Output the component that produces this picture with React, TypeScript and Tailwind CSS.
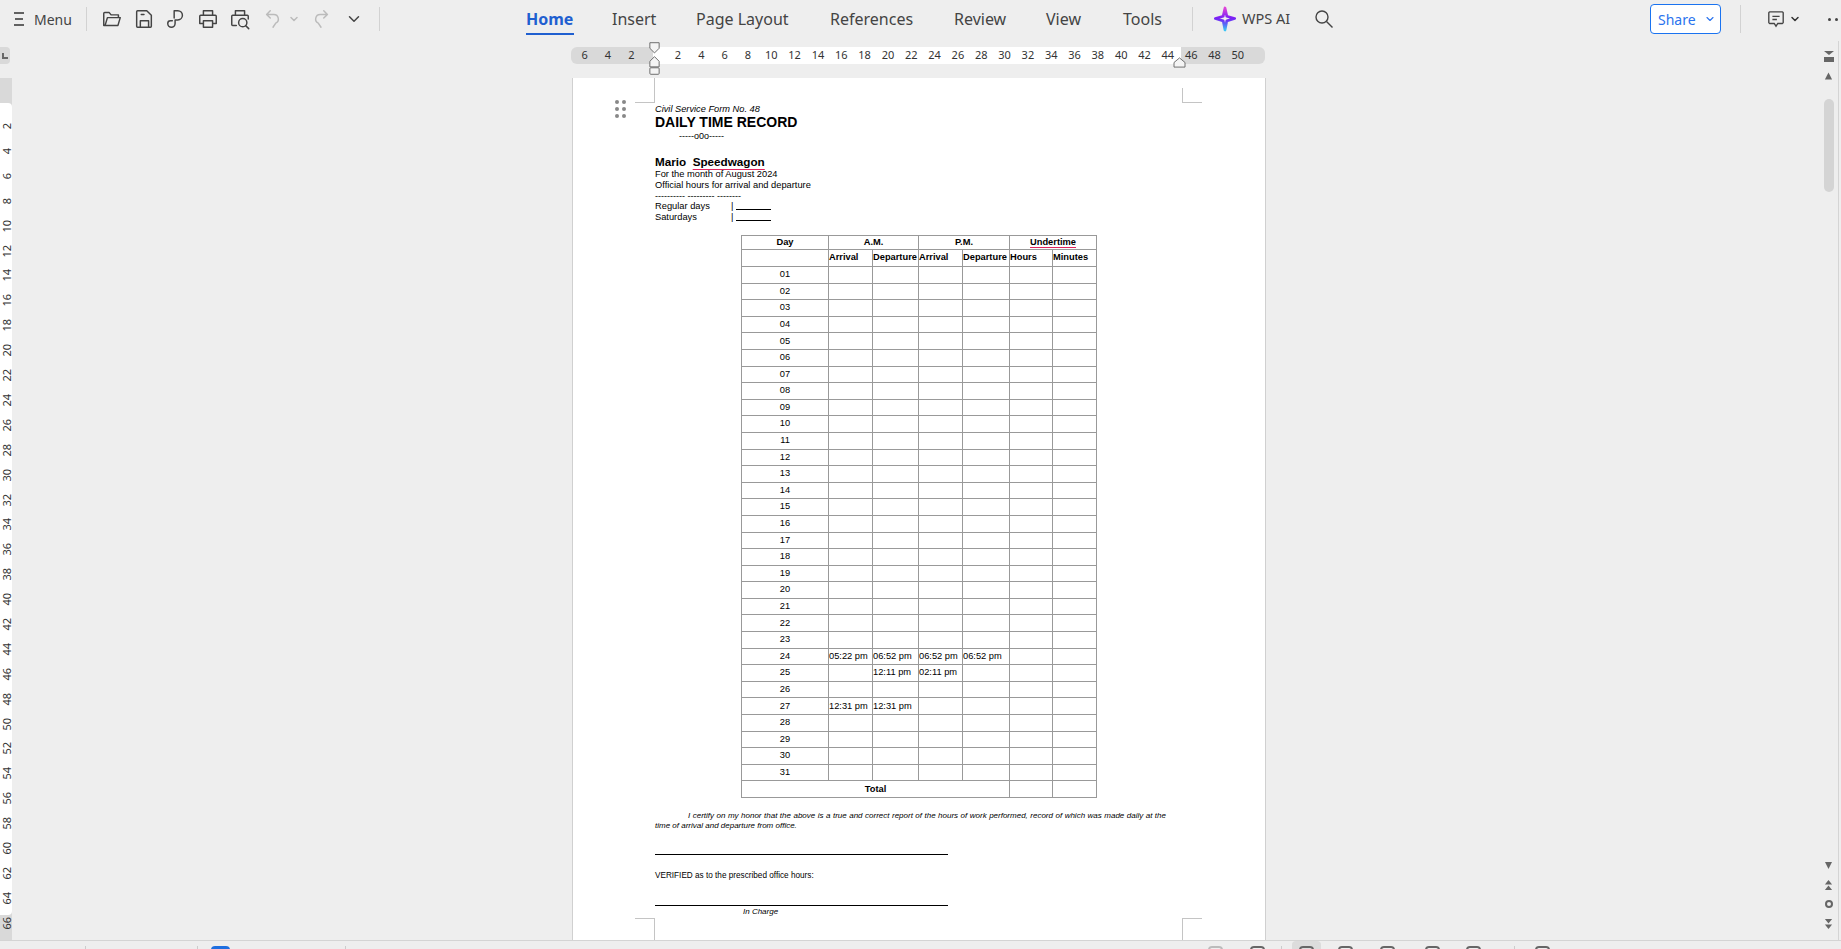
import { ChevronDown } from "lucide-react";
import React from "react";

const tabs = [
    { label: "Home", cls: "w-[86px] text-[#1f5fd0] font-bold" },
    { label: "Insert", cls: "w-[84px]" },
    { label: "Page Layout", cls: "w-[134px]" },
    { label: "References", cls: "w-[124px]" },
    { label: "Review", cls: "w-[92px]" },
    { label: "View", cls: "w-[77px]" },
    { label: "Tools", cls: "w-[60px]" },
];

const hRuler = [6, 4, 2, 0, 2, 4, 6, 8, 10, 12, 14, 16, 18, 20, 22, 24, 26, 28, 30, 32, 34, 36, 38, 40, 42, 44, 46, 48, 50];
const vRuler = Array.from({ length: 33 }, (_, i) => (i + 1) * 2);

const times: Record<number, string[]> = {
    24: ["05:22 pm", "06:52 pm", "06:52 pm", "06:52 pm"],
    25: ["", "12:11 pm", "02:11 pm", ""],
    27: ["12:31 pm", "12:31 pm", "", ""],
};

const days = Array.from({ length: 31 }, (_, i) => i + 1);

const IconBox = ({ children, className = "" }: { children: React.ReactNode; className?: string }) => (
    <svg viewBox="0 0 24 24" fill="none" stroke="currentColor" strokeWidth="1.6" strokeLinejoin="round" strokeLinecap="round" className={`w-[22px] h-[22px] ${className}`}>
        {children}
    </svg>
);

const Toolbar = () => (
    <div className="h-[38px] flex items-center shrink-0 text-[#444]">
        <div className="w-[86px] flex items-center pl-[14px] gap-[10px] shrink-0">
            <svg viewBox="0 0 10 14" className="w-[10px] h-[14px]" stroke="#333" strokeWidth="1.5">
                <path d="M0 1h10M1 7h8M0 13h10" />
            </svg>
            <span className="text-[14px]">Menu</span>
        </div>
        <div className="w-px h-6 bg-[#d2d2d2] shrink-0" />
        <div className="w-[292px] flex items-center pl-[14px] shrink-0">
            <IconBox className="mr-[10px]">
                <path d="M3 19V6a1 1 0 0 1 1-1h5l2 2.500h8v3M3 19h15.500l2.500-8.500H7L4.500 19" />
            </IconBox>
            <IconBox className="mr-[10px]">
                <path d="M5 3h10l5 5v12a1 1 0 0 1-1 1H5a1 1 0 0 1-1-1V4a1 1 0 0 1 1-1zM8 21v-7h9v7M9 7h3" />
            </IconBox>
            <IconBox className="mr-[10px]">
                <path d="M10 3h4a5 5 0 0 1 0 10h-3v4a4 4 0 0 1-8 0 3 3 0 0 1 3-3h2M10 3v8" />
            </IconBox>
            <IconBox className="mr-[10px]">
                <path d="M7 8V3h10v5M4 8h16a1 1 0 0 1 1 1v8h-4M7 17H3V9a1 1 0 0 1 1-1M7 14h10v7H7z" />
            </IconBox>
            <IconBox className="mr-[11px]">
                <path d="M7 8V3h10v5M8 19H4a1 1 0 0 1-1-1V9a1 1 0 0 1 1-1h16a1 1 0 0 1 1 1v3" />
                <circle cx="15" cy="16" r="4.500" />
                <path d="M18 19l3.500 3.500" />
            </IconBox>
            <IconBox className="text-[#bbb]">
                <path d="M9 3L5 7l4 4M5 7h8a5 5 0 0 1 2 9.500L12 21" />
            </IconBox>
            <ChevronDown className="w-3 h-3 text-[#bbb] mx-[4px]" strokeWidth={3} />
            <IconBox className="text-[#bbb] ml-[6px] mr-[13px]">
                <path d="M15 3l4 4-4 4M19 7h-8a5 5 0 0 0-2 9.500L12 21" />
            </IconBox>
            <ChevronDown className="w-[18px] h-[18px] text-[#444]" strokeWidth={2} />
        </div>
        <div className="w-px h-6 bg-[#d2d2d2] shrink-0" />
        <div className="flex items-center pl-[146px] shrink-0">
            {tabs.map((t) => (
                <div key={t.label} className={`h-[38px] flex items-center text-[16px] relative shrink-0 ${t.cls}`}>
                    {t.label}
                    {t.label === "Home" && <div className="absolute left-0 bottom-[3px] w-[48px] h-[2px] bg-[#1f5fd0]" />}
                </div>
            ))}
        </div>
        <div className="w-px h-6 bg-[#d2d2d2] ml-[9px] shrink-0" />
        <svg viewBox="0 0 24 28" className="w-[22px] h-[26px] ml-[21px] shrink-0">
            <defs>
                <linearGradient id="aiStar" x1="0" y1="0" x2="0" y2="1">
                    <stop offset="0" stopColor="#e045d8" />
                    <stop offset="0.45" stopColor="#7a1ff5" />
                    <stop offset="0.6" stopColor="#6a3cf5" />
                    <stop offset="1" stopColor="#3cc4f5" />
                </linearGradient>
            </defs>
            <path d="M12 2 L14 11 L22.500 13.500 L14 16 L12 26 L10 16 L1.500 13.500 L10 11 Z" fill="none" stroke="url(#aiStar)" strokeWidth="3" strokeLinejoin="round" />
        </svg>
        <span className="text-[14.500px] ml-[6px] w-[48px] shrink-0 whitespace-nowrap">WPS AI</span>
        <svg viewBox="0 0 18 18" fill="none" stroke="#444" strokeWidth="1.4" className="w-[18px] h-[18px] ml-[25px] shrink-0">
            <circle cx="7" cy="7" r="6" />
            <path d="M11.500 11.500L17.500 17.500" />
        </svg>
        <div className="ml-[317px] w-[71px] h-[30px] shrink-0 bg-white border border-[#1a73f0] rounded flex items-center pl-[7px] text-[#2a73ee] text-[14px]">
            Share
            <ChevronDown className="w-3 h-3 ml-[8px]" strokeWidth={2.2} />
        </div>
        <div className="w-px h-7 bg-[#d2d2d2] ml-[19px] shrink-0" />
        <svg viewBox="0 0 20 20" fill="none" stroke="#444" strokeWidth="1.500" className="w-[18px] h-[18px] ml-[26px] shrink-0">
            <path d="M3 2h14a1.500 1.500 0 0 1 1 1v11a1.500 1.500 0 0 1-1 1h-5l-2 3-2-3H3a1.500 1.500 0 0 1-1-1V3a1.500 1.500 0 0 1 1-1zM6 7h8M6 10.500h5" />
        </svg>
        <ChevronDown className="w-3 h-3 ml-[4px] text-[#333] shrink-0" strokeWidth={3} />
        <div className="flex gap-[4px] ml-[27px] shrink-0">
            <div className="w-[3px] h-[3px] rounded-full bg-[#444]" />
            <div className="w-[3px] h-[3px] rounded-full bg-[#444]" />
            <div className="w-[3px] h-[3px] rounded-full bg-[#444]" />
        </div>
    </div>
);

const RulerRow = () => (
    <div className="h-[40px] pt-[9px] flex shrink-0">
        <div className="w-[10px] h-[17px] bg-[#d9d9d9] rounded-r flex items-end justify-center pb-[5px] shrink-0">
            <div className="w-[6px] h-[6px] border-l-2 border-b-2 border-[#666]" />
        </div>
        <div className="relative ml-[561px] w-[694px] h-[17px] bg-[#d9d9d9] rounded-md flex text-[11px] text-[#333] shrink-0">
            <div className="absolute left-[82px] top-0 w-[528px] h-[17px] bg-white" />
            <div className="relative flex pl-[2px]">
                {hRuler.map((n, i) => (
                    <div key={i} className="w-[23.33px] h-[17px] flex items-center justify-center shrink-0">
                        {n !== 0 ? n : ""}
                    </div>
                ))}
            </div>
            <svg viewBox="0 0 14 36" className="absolute left-[77px] -top-[6px] w-[13px] h-[35px]" fill="#f4f4f4" stroke="#666">
                <path d="M2 1h10v6l-5 5-5-5zM7 16l5 5v6H2v-6zM3 28h8a1 1 0 0 1 1 1v5a1 1 0 0 1-1 1H3a1 1 0 0 1-1-1v-5a1 1 0 0 1 1-1z" />
            </svg>
            <svg viewBox="0 0 14 12" className="absolute left-[602px] top-[10px] w-[13px] h-[11px]" fill="#f4f4f4" stroke="#666">
                <path d="M7 1l6 5v5H1V6z" />
            </svg>
        </div>
    </div>
);

const VerticalRuler = () => (
    <div className="w-3 h-full bg-[#d9d9d9] relative shrink-0">
        <div className="absolute left-0 top-[25px] w-3 h-[812px] bg-white rounded-r" />
        <div className="relative pt-[36px] flex flex-col items-center">
            {vRuler.map((n) => (
                <div key={n} className="h-[24.900px] w-3 flex items-center justify-center shrink-0 text-[11px] leading-none text-[#333]">
                    <span className="[writing-mode:vertical-rl] rotate-180 block">{n}</span>
                </div>
            ))}
        </div>
    </div>
);

const CellTd = (props: React.TdHTMLAttributes<HTMLTableCellElement>) => (
    <td {...props} className={`border border-[#999] p-0 align-middle leading-none whitespace-nowrap ${props.className ?? ""}`} />
);

const DtrTable = () => (
    <table className="table-fixed border-collapse w-[355px] ml-[86px] mt-[12px] text-[9.300px] text-black">
        <colgroup>
            <col className="w-[87px]" />
            <col className="w-[44px]" />
            <col className="w-[46px]" />
            <col className="w-[44px]" />
            <col className="w-[47px]" />
            <col className="w-[43px]" />
            <col className="w-[44px]" />
        </colgroup>
        <tbody>
            <tr className="h-[14px] font-bold text-center">
                <CellTd>Day</CellTd>
                <CellTd colSpan={2}>A.M.</CellTd>
                <CellTd colSpan={2}>P.M.</CellTd>
                <CellTd colSpan={2}>
                    <span className="underline decoration-[#e0245e] underline-offset-2">Undertime</span>
                </CellTd>
            </tr>
            <tr className="h-[17px] font-bold">
                <CellTd />
                <CellTd>Arrival</CellTd>
                <CellTd>Departure</CellTd>
                <CellTd>Arrival</CellTd>
                <CellTd>Departure</CellTd>
                <CellTd>Hours</CellTd>
                <CellTd>Minutes</CellTd>
            </tr>
            {days.map((d) => {
                const row = times[d] ?? ["", "", "", ""];
                return (
                    <tr key={d} className="h-[16.600px]">
                        <CellTd className="text-center">{String(d).padStart(2, "0")}</CellTd>
                        {row.map((t, i) => (
                            <CellTd key={i}>{t}</CellTd>
                        ))}
                        <CellTd />
                        <CellTd />
                    </tr>
                );
            })}
            <tr className="h-[17px] font-bold">
                <CellTd colSpan={5} className="text-center">Total</CellTd>
                <CellTd />
                <CellTd />
            </tr>
        </tbody>
    </table>
);

const Page = () => (
    <div className="relative w-[694px] h-[862px] bg-white border-x border-[#d0d0d0] shrink-0 overflow-hidden font-['Liberation_Sans',Arial,sans-serif] text-black">
        <div className="absolute left-[62px] top-0 w-5 h-[25px] border-r border-b border-[#c4c4c4]" />
        <div className="absolute left-[609px] top-[10px] w-5 h-[15px] border-l border-b border-[#c4c4c4]" />
        <div className="absolute left-[62px] top-[840px] w-5 h-[22px] border-r border-t border-[#c4c4c4]" />
        <div className="absolute left-[609px] top-[840px] w-5 h-[22px] border-l border-t border-[#c4c4c4]" />
        <div className="absolute left-[42px] top-[22px] grid grid-cols-2 gap-x-[3px] gap-y-[3px]">
            {[0, 1, 2, 3, 4, 5].map((i) => (
                <div key={i} className="w-[4px] h-[4px] rounded-full bg-[#888]" />
            ))}
        </div>

        <div className="pl-[82px] pt-[26px] w-[580px]">
            <div className="text-[9.250px] italic leading-[11px]">Civil Service Form No. 48</div>
            <div className="text-[14px] font-bold leading-[15px]">DAILY TIME RECORD</div>
            <div className="text-[9px] leading-[11px] mt-[1px] pl-[24px]">-----o0o-----</div>
            <div className="text-[11.700px] font-bold leading-[14px] mt-[13px]">
                Mario &nbsp;<span className="underline decoration-[#e0245e] underline-offset-[3px]">Speedwagon</span>
            </div>
            <div className="text-[9.300px] leading-[11px]">For the month of August 2024</div>
            <div className="text-[9.300px] leading-[11px]">Official hours for arrival and departure</div>
            <div className="text-[9px] leading-[10px]">---------- --------- --------</div>
            <div className="text-[9.300px] leading-[11px] flex">
                <span className="w-[76px]">Regular days</span>
                <span>|</span>
                <span className="w-[35px] h-[9px] border-b border-black ml-[3px]" />
            </div>
            <div className="text-[9.300px] leading-[11px] flex">
                <span className="w-[76px]">Saturdays</span>
                <span>|</span>
                <span className="w-[35px] h-[9px] border-b border-black ml-[3px]" />
            </div>
            <DtrTable />
            <div className="text-[8px] italic leading-[10px] mt-[13px] w-[511px] text-justify">
                <span className="inline-block w-[33px]" />I certify on my honor that the above is a true and correct report of the hours of work performed, record of which was made daily at the time of arrival and departure from office.
            </div>
            <div className="w-[293px] h-px bg-black mt-[23px]" />
            <div className="text-[8.200px] leading-[10px] mt-[16px]">VERIFIED as to the prescribed office hours:</div>
            <div className="w-[293px] h-px bg-black mt-[24px]" />
            <div className="text-[8px] italic leading-[10px] mt-[1px] pl-[88px]">In Charge</div>
        </div>
    </div>
);

const RightBar = () => (
    <div className="w-[17px] h-[899px] -mt-[37px] ml-auto mr-[2px] pr-[3px] flex flex-col items-center border-r border-[#d4d4d4] shrink-0">
        <svg viewBox="0 0 10 11" className="w-[10px] h-[11px] mt-[10px] shrink-0" fill="#666"><path d="M0 0h10L5 4zM0 6h10v5H0z" /></svg>
        <svg viewBox="0 0 10 8" className="w-[9px] h-[8px] mt-[10px] shrink-0" fill="#666"><path d="M5 0l4 8H1z" /></svg>
        <div className="w-[10px] h-[93px] bg-[#d4d4d4] rounded-full mt-[19px] shrink-0" />
        <svg viewBox="0 0 10 8" className="w-[9px] h-[7px] mt-[670px] shrink-0" fill="#666"><path d="M5 8L1 0h8z" /></svg>
        <svg viewBox="0 0 10 11" className="w-[9px] h-[10px] mt-[11px] shrink-0" fill="#666"><path d="M5 0l4 5H1zM5 6l4 5H1z" /></svg>
        <div className="w-[8px] h-[8px] border-2 border-[#666] rounded-sm mt-[10px] shrink-0" />
        <svg viewBox="0 0 10 11" className="w-[9px] h-[10px] mt-[11px] shrink-0" fill="#666"><path d="M5 5L1 0h8zM5 11L1 6h8z" /></svg>
    </div>
);

const Sep = ({ className = "" }: { className?: string }) => <div className={`w-px h-4 bg-[#ccc] shrink-0 ${className}`} />;
const StatusIcon = ({ className = "" }: { className?: string }) => (
    <div className={`w-[15px] h-[8px] border-2 border-[#666] rounded-t-sm shrink-0 ${className}`} />
);

const StatusBar = () => (
    <div className="h-[9px] border-t border-[#d4d4d4] flex items-start pt-[5px] shrink-0 overflow-hidden">
        <Sep className="ml-[85px]" />
        <Sep className="ml-[111px]" />
        <div className="w-[19px] h-3 bg-[#1f6fe0] rounded-t-sm ml-[13px] shrink-0" />
        <Sep className="ml-[115px]" />
        <StatusIcon className="ml-[862px] border-[#bbb]" />
        <StatusIcon className="ml-[27px]" />
        <Sep className="ml-[16px]" />
        <div className="w-[29px] h-4 bg-[#dcdcdc] rounded-t ml-[10px] -mt-[5px] pt-[5px] pl-[7px] shrink-0">
            <StatusIcon />
        </div>
        <StatusIcon className="ml-[17px]" />
        <StatusIcon className="ml-[27px] w-[10px]" />
        <StatusIcon className="ml-[30px]" />
        <StatusIcon className="ml-[26px]" />
        <Sep className="ml-[33px]" />
        <StatusIcon className="ml-[20px]" />
    </div>
);

export default function App() {
    return (
        <div className="w-[1841px] h-[949px] bg-[#eeeeee] flex flex-col overflow-hidden font-['Noto_Sans',sans-serif]">
            <Toolbar />
            <RulerRow />
            <div className="flex flex-1 min-h-0">
                <VerticalRuler />
                <div className="ml-[560px] h-full shrink-0">
                    <Page />
                </div>
                <RightBar />
            </div>
            <StatusBar />
        </div>
    );
}
